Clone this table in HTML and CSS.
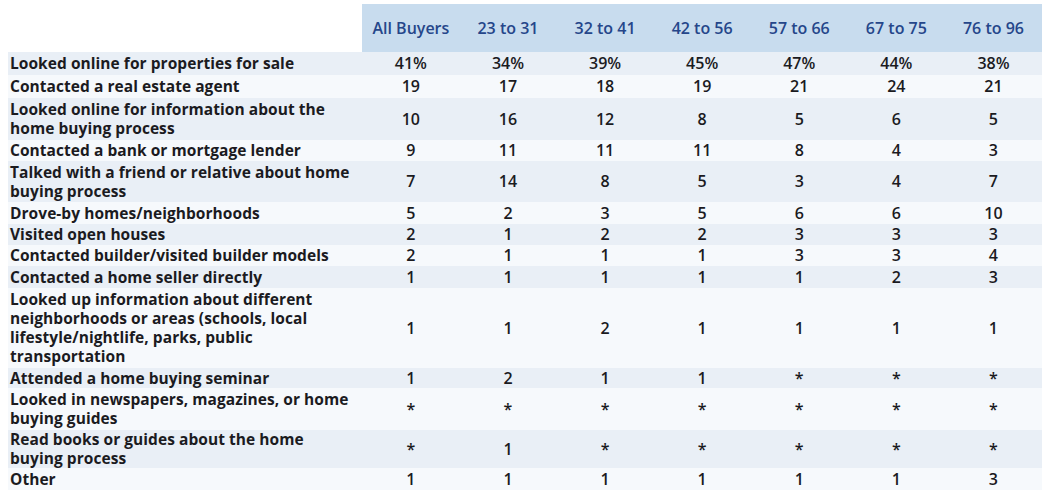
FILE: index.html
```html
<!DOCTYPE html>
<html>
<head>
<meta charset="utf-8">
<link rel="stylesheet" href="styles.css">
</head>
<body>
<table class="grid">
  <colgroup>
    <col class="c-label">
    <col class="c-num"><col class="c-num"><col class="c-num"><col class="c-num"><col class="c-num"><col class="c-num"><col class="c-num">
  </colgroup>
  <thead>
    <tr>
      <th class="blank"></th>
      <th>All Buyers</th><th>23 to 31</th><th>32 to 41</th><th>42 to 56</th><th>57 to 66</th><th>67 to 75</th><th>76 to 96</th>
    </tr>
  </thead>
  <tbody>
    <tr class="h23"><td class="label">Looked online for properties for sale</td><td>41%</td><td>34%</td><td>39%</td><td>45%</td><td>47%</td><td>44%</td><td>38%</td></tr>
    <tr class="h23"><td class="label">Contacted a real estate agent</td><td>19</td><td>17</td><td>18</td><td>19</td><td>21</td><td>24</td><td>21</td></tr>
    <tr class="h42"><td class="label">Looked online for information about the<br>home buying process</td><td>10</td><td>16</td><td>12</td><td>8</td><td>5</td><td>6</td><td>5</td></tr>
    <tr class="h21"><td class="label">Contacted a bank or mortgage lender</td><td>9</td><td>11</td><td>11</td><td>11</td><td>8</td><td>4</td><td>3</td></tr>
    <tr class="h41"><td class="label">Talked with a friend or relative about home<br>buying process</td><td>7</td><td>14</td><td>8</td><td>5</td><td>3</td><td>4</td><td>7</td></tr>
    <tr class="h22"><td class="label">Drove-by homes/neighborhoods</td><td>5</td><td>2</td><td>3</td><td>5</td><td>6</td><td>6</td><td>10</td></tr>
    <tr class="h21"><td class="label">Visited open houses</td><td>2</td><td>1</td><td>2</td><td>2</td><td>3</td><td>3</td><td>3</td></tr>
    <tr class="h21"><td class="label">Contacted builder/visited builder models</td><td>2</td><td>1</td><td>1</td><td>1</td><td>3</td><td>3</td><td>4</td></tr>
    <tr class="h22"><td class="label">Contacted a home seller directly</td><td>1</td><td>1</td><td>1</td><td>1</td><td>1</td><td>2</td><td>3</td></tr>
    <tr class="h80"><td class="label">Looked up information about different<br>neighborhoods or areas (schools, local<br>lifestyle/nightlife, parks, public<br>transportation</td><td>1</td><td>1</td><td>2</td><td>1</td><td>1</td><td>1</td><td>1</td></tr>
    <tr class="h20"><td class="label">Attended a home buying seminar</td><td>1</td><td>2</td><td>1</td><td>1</td><td>*</td><td>*</td><td>*</td></tr>
    <tr class="h42"><td class="label">Looked in newspapers, magazines, or home<br>buying guides</td><td>*</td><td>*</td><td>*</td><td>*</td><td>*</td><td>*</td><td>*</td></tr>
    <tr class="h38"><td class="label">Read books or guides about the home<br>buying process</td><td>*</td><td>1</td><td>*</td><td>*</td><td>*</td><td>*</td><td>*</td></tr>
    <tr class="h22"><td class="label">Other</td><td>1</td><td>1</td><td>1</td><td>1</td><td>1</td><td>1</td><td>3</td></tr>
  </tbody>
</table>
</body>
</html>
```

FILE: styles.css
```css
html, body {
  background: #ffffff;
}
body {
  margin: 4px 0 0 8px;
  font-family: "Open Sans", "Liberation Sans", sans-serif;
  color: #1b1b1f;
}
.grid {
  border-collapse: collapse;
  border-spacing: 0;
  width: 1034px;
  table-layout: fixed;
}
.c-label { width: 354px; }
.c-num { width: 97px; }
.grid th {
  height: 48px;
  padding: 0;
  background: #c8dcee;
  color: #25468a;
  font-size: 16px;
  font-weight: 600;
  text-align: center;
  vertical-align: middle;
}
.grid th.blank {
  background: #ffffff;
}
.grid td {
  padding: 0;
  line-height: 19px;
  font-size: 16px;
  font-weight: 600;
  text-align: center;
  vertical-align: middle;
}
.grid td.label {
  text-align: left;
  padding-left: 2px;
  font-size: 15.5px;
  font-weight: 700;
  letter-spacing: 0.05px;
}
.grid tbody tr:nth-child(odd) {
  background: #e9eff6;
}
.grid tbody tr:nth-child(even) {
  background: #f6f9fc;
}
.h20 td { height: 20px; }
.h21 td { height: 21px; }
.h22 td { height: 22px; }
.h23 td { height: 23px; }
.h38 td { height: 38px; }
.h41 td { height: 41px; }
.h42 td { height: 42px; }
.h80 td { height: 80px; }
```
